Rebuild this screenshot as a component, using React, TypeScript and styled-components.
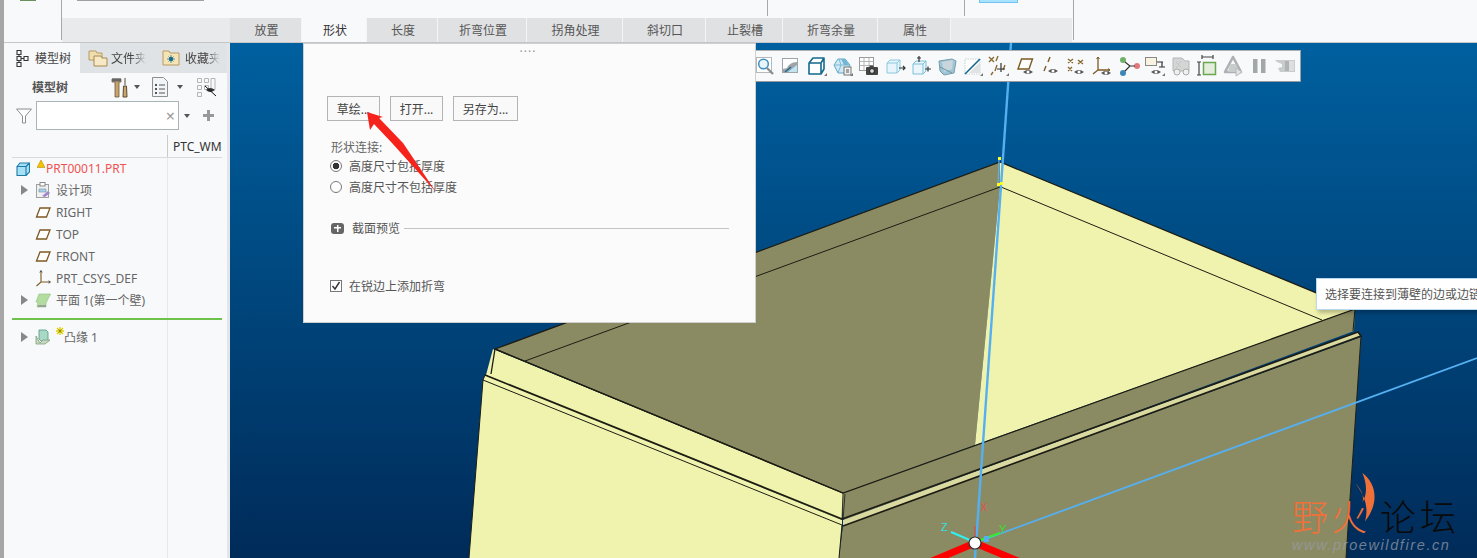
import React from "react";
import styled, { createGlobalStyle } from "styled-components";

const FONT = `"Noto Sans", "Noto Sans CJK SC", "Liberation Sans", sans-serif`;

const GlobalStyle = createGlobalStyle`
  html, body { margin: 0; padding: 0; background: #f8f9fb; }
  * { box-sizing: border-box; }
`;

const ribbonTabs = [
  { label: "放置", w: 72 },
  { label: "形状", w: 65, active: true },
  { label: "长度", w: 71 },
  { label: "折弯位置", w: 89 },
  { label: "拐角处理", w: 96 },
  { label: "斜切口", w: 83 },
  { label: "止裂槽", w: 77 },
  { label: "折弯余量", w: 95 },
  { label: "属性", w: 73 },
];

const Ic = ({ children, size = 24, w, h }: { children: React.ReactNode; size?: number; w?: number; h?: number }) => (
  <svg width={w ?? size} height={h ?? size} viewBox={`0 0 ${w ?? size} ${h ?? size}`} fill="none" style={{ display: "block", flexShrink: 0 }}>
    {children}
  </svg>
);

const Corner = () => <path d="M22 19v3h-3z" fill="#777" />;
const Eye = ({ x = 14, y = 18 }: { x?: number; y?: number }) => (
  <g>
    <path d={`M${x - 5} ${y}q5 -4 10 0q-5 4 -10 0z`} fill="#555" />
    <circle cx={x} cy={y} r="1.5" fill="#fff" />
  </g>
);

// mini toolbar over the model, in order from the left
const toolIcons: React.ReactNode[] = [
  <>
    <rect x="3.5" y="3.5" width="15" height="15" stroke="#b5b9bc" fill="#fff" />
    <circle cx="10.5" cy="10" r="4.8" stroke="#3f8fc0" strokeWidth="1.5" fill="#e8f5fb" />
    <path d="M14 14l6 6" stroke="#8a8f92" strokeWidth="2.4" />
  </>,
  <>
    <rect x="3" y="4" width="16" height="15" fill="#9fa4a8" />
    <path d="M4 5h14v3c-5 0-9 3-10 6l-4 1z" fill="#fff" />
    <path d="M9 18l9-7v7z" fill="#bfe6f5" />
    <path d="M6 18l6-5" stroke="#1d6c92" strokeWidth="1.5" />
  </>,
  <>
    <path d="M4 9h12v11H4zM4 9l4-5h11v11l-3 5M16 9l3-5" stroke="#14688f" strokeWidth="1.6" fill="#fff" strokeLinejoin="round" />
    <Corner />
  </>,
  <>
    <path d="M3 11l4-6h7l5 6-4 8H7z" fill="#cfeaf6" stroke="#5fa6c4" />
    <path d="M8 5l2 6h9M10 11l-7 0M10 11l-3 8" stroke="#7db8d2" />
    <path d="M10 5h4l4 6h-5z" fill="#6fb6d8" />
    <rect x="13" y="13" width="7" height="8" fill="#f1f1f1" stroke="#777" />
    <path d="M15 16h3M15 18h3" stroke="#555" />
    <Corner />
  </>,
  <>
    <rect x="2.5" y="3.5" width="14" height="13" fill="#fff" stroke="#9a9a9a" />
    <path d="M2.5 7.5h14M2.5 11.5h14M7 3.5v13M12 3.5v13" stroke="#b5b5b5" />
    <rect x="9" y="13" width="12" height="8" rx="1" fill="#444" />
    <rect x="12.5" y="11.5" width="4" height="2" fill="#444" />
    <circle cx="15" cy="17" r="2.4" fill="#ddd" stroke="#222" />
  </>,
  <>
    <path d="M4 9l3-3h10v10l-3 3H4z" fill="#e6f5fb" stroke="#8cc6dd" />
    <path d="M4 9h10v10M14 9l3-3" stroke="#8cc6dd" />
    <path d="M16 14h6M20 12l2 2-2 2" stroke="#333" strokeWidth="1.2" />
  </>,
  <>
    <path d="M4 10l3-3h10v10l-3 3H4z" fill="#eaf6fb" stroke="#7cbfd9" />
    <path d="M4 10h10v10M14 10l3-3" stroke="#7cbfd9" />
    <path d="M10 2v6M8 4h4M16 15h6M19 12.5v5" stroke="#333" strokeWidth="1.2" />
  </>,
  <>
    <path d="M4 7l13-2 4 2-2 12-10 2-4-4z" fill="#9fc6d6" stroke="#7c9cab" />
    <path d="M7 8l11-2-1 9-8 3z" fill="#c9d6dc" />
    <path d="M5 13l12 6" stroke="#6d97a9" />
  </>,
  <>
    <path d="M4 5h15v15H4z" fill="#fff" stroke="#c7ced2" strokeDasharray="1.5 1" />
    <path d="M4 20L19 5" stroke="#14688f" strokeWidth="1.6" />
    <path d="M19 8v11H8z" fill="#dfe3e5" />
    <Corner />
  </>,
  <>
    <path d="M2 3l5 5M7 3L2 8M11 2l-2 5M10 11l-2 6M18 11l-2 5M6 18l-2 3" stroke="#8a6a30" strokeWidth="1.4" />
    <path d="M14 9v9M10 15h8" stroke="#333" strokeWidth="1.2" />
    <Corner />
  </>,
  <>
    <path d="M5 15L8.5 5h11L16 15z" stroke="#7d5a22" strokeWidth="1.4" fill="#fff" />
    <Eye x={15} y={18} />
  </>,
  <>
    <path d="M11 3L9 8M7 12l-2 5" stroke="#7d5a22" strokeWidth="1.4" />
    <Eye x={14} y={17} />
  </>,
  <>
    <path d="M3 5l5 4M8 5l-5 4M13 6l5 4M18 6l-5 4M3 13l4 4M7 13l-4 4" stroke="#8a6a30" strokeWidth="1.4" />
    <Eye x={14} y={18} />
  </>,
  <>
    <path d="M7 3v13l-5 4M7 16h12" stroke="#7d5a22" strokeWidth="1.3" />
    <path d="M5.5 5L7 3l1.5 2M17 14.5l2 1.5-2 1.5" stroke="#7d5a22" />
    <Eye x={15} y={19} />
  </>,
  <>
    <circle cx="6" cy="6" r="3" fill="#6fb06a" />
    <circle cx="20" cy="12" r="3" fill="#e2787a" />
    <circle cx="6" cy="19" r="3" fill="#3f88b5" />
    <path d="M8 8l5 4-5 5M13 12h5" stroke="#333" strokeWidth="1.2" />
  </>,
  <>
    <rect x="2.5" y="3.5" width="11" height="8" fill="#fbf3e2" stroke="#888" />
    <path d="M14 8h6M19 8v5M16 13h6" stroke="#333" strokeWidth="1.2" />
    <Eye x={13} y={18} />
    <Corner />
  </>,
  <>
    <path d="M4 4h9l3 3h4v10H4z" fill="#d4d6d6" stroke="#b4b6b6" />
    <path d="M7 8l5 5M12 7l-5 7" stroke="#bbb" strokeDasharray="1 1" />
    <circle cx="8" cy="18" r="3" stroke="#aaa" fill="#f0f0f0" />
    <circle cx="17" cy="18" r="3" stroke="#aaa" fill="#f0f0f0" />
  </>,
  <>
    <path d="M7 3h11M7 1v4M18 1v4M4 8v13M2 8h4M2 21h4" stroke="#444" strokeWidth="1.2" />
    <rect x="8.5" y="8.5" width="12" height="12" fill="#e4ecdc" stroke="#6aa84f" strokeWidth="1.5" />
  </>,
  <>
    <path d="M12 3l8 15H4z" stroke="#aeb1b3" strokeWidth="2.6" strokeLinejoin="round" />
    <path d="M9 10l6 0 3 8H7z" fill="#c9cccd" />
    <path d="M15 14l6 4-6 4z" fill="#e1e3e4" stroke="#b8babc" />
  </>,
  <>
    <rect x="6" y="5" width="4.5" height="14" fill="#a4a7a9" />
    <rect x="14" y="5" width="4.5" height="14" fill="#a4a7a9" />
  </>,
  <>
    <path d="M2 6h20v12H7l-2-4 4-1v-3L4 8z" fill="#c9cccd" />
    <path d="M12 7h9v10h-9z" fill="#b0b3b5" />
    <path d="M16 7h5v10h-5z" fill="#dcdedf" />
  </>,
];

const treeRows = [
  { label: "设计项", arrow: true, icon: "design" },
  { label: "RIGHT", icon: "plane" },
  { label: "TOP", icon: "plane" },
  { label: "FRONT", icon: "plane" },
  { label: "PRT_CSYS_DEF", icon: "csys" },
  { label: "平面 1(第一个壁)", arrow: true, icon: "wall" },
];

const TreeIcon = ({ kind }: { kind: string }) => {
  if (kind === "plane")
    return (
      <Ic w={16} h={16}>
        <path d="M1.5 13L5 4h10l-3.5 9z" stroke="#7d5a22" strokeWidth="1.3" fill="#fff" />
      </Ic>
    );
  if (kind === "csys")
    return (
      <Ic w={16} h={18}>
        <path d="M6 2v11L1.5 17M6 13h9" stroke="#7d5a22" strokeWidth="1.1" />
        <path d="M4.8 3.5L6 1.5l1.2 2M13.5 11.8l2 1.2-2 1.2" stroke="#444" strokeWidth="0.9" />
      </Ic>
    );
  if (kind === "wall")
    return (
      <Ic w={16} h={16}>
        <path d="M4 2h11.5L11 11v4H2l1-5-2 0z" fill="#b3dda0" stroke="#8fbf7a" strokeWidth="0.6" />
        <path d="M3 13h8v2H3z" fill="#9aa09a" />
      </Ic>
    );
  if (kind === "design")
    return (
      <Ic w={16} h={16}>
        <rect x="1.5" y="2.5" width="12" height="13" fill="#f1f1f1" stroke="#a0a0a0" />
        <rect x="5" y="0.5" width="5" height="3.5" fill="#fff" stroke="#888" />
        <path d="M4 7h7v3H4z" fill="#a9d2e6" stroke="#6c8fa1" strokeWidth="0.6" />
        <path d="M7 14l6-5 2 2-5 4z" fill="#a184c9" />
      </Ic>
    );
  return (
    <Ic w={16} h={18}>
      <path d="M4 2h7l2 2v9H6l-2-2z" fill="#a9d8c4" stroke="#4f9a86" strokeWidth="0.8" />
      <path d="M1 8v8h9l5-4H8l-3 3z" fill="#c9d8c0" stroke="#7d9e7a" strokeWidth="0.8" />
    </Ic>
  );
};

function ModelScene() {
  return (
    <Scene viewBox="230 43 1247 515">
      <polygon points="495,349 1000,162 1000,187 975,445 843,493" fill="#8b8b63" />
      <polygon points="1000,162 1355,309 975,445 1000,187" fill="#f0f3ad" />
      <polygon points="843,493 1355,309 1354,331 843,520" fill="#8b8b63" />
      <polygon points="843,526 1361,337 1346,558 839,558" fill="#8b8b63" />
      <polygon points="493,349 843,493 842,520 486,375" fill="#f0f3ad" />
      <polygon points="485,375 842,520 842,526 483,380" fill="#f0f3ad" />
      <polygon points="483,380 842,525 839,558 469,558" fill="#f0f3ad" />
      <polygon points="843,520 1358,332 1361,336 843,526" fill="#d9d9a0" />
      <g stroke="#1d1d14" fill="none">
        <path d="M495 349L1000 162L1355 309L843 493Z" strokeWidth="1.3" />
        <path d="M843 493L495 349L491 374" strokeWidth="1.3" />
        <path d="M1000 187L525 361" strokeWidth="1" />
        <path d="M1001 187L1322 320" strokeWidth="1" />
        <path d="M1355 309L1353 331" strokeWidth="1" />
        <path d="M485 375L842 519L1358 332L1361 336L843 526" strokeWidth="1.7" />
        <path d="M485 375L483 380L842 525L839 558" strokeWidth="1" />
        <path d="M483 380L469 558" strokeWidth="1" />
        <path d="M843 493L842 520M845 494L843 520" strokeWidth="0.8" />
        <path d="M1361 336L1346 558" strokeWidth="1" />
      </g>
      <g stroke="#55b0f2" fill="none">
        <path d="M1011 43L975 558" strokeWidth="2.4" />
        <path d="M975 543L1477 358" strokeWidth="1.8" />
        <path d="M999 160L998 185" strokeWidth="1.2" />
      </g>
      <g fill="#ffff20">
        <rect x="998" y="157" width="3" height="3" />
        <rect x="997" y="183" width="3" height="3" />
        <rect x="1000" y="182" width="3" height="3" />
      </g>
      <path d="M975 543L925 564M975 543L1025 564" stroke="#ff0000" strokeWidth="7" />
      <path d="M972 541L951 532" stroke="#30f0f0" strokeWidth="2" />
      <path d="M978 541L1000 533" stroke="#30f030" strokeWidth="2" />
      <path d="M975 538v-12" stroke="#d05050" strokeWidth="1.2" />
      <rect x="984" y="536" width="5" height="6" fill="#55b0f2" />
      <circle cx="975" cy="543" r="6" fill="#fff" stroke="#333" strokeWidth="1.2" />
      <AxisLabel x="980" y="511" fill="#e05050">X</AxisLabel>
      <AxisLabel x="941" y="531" fill="#30e0e0">Z</AxisLabel>
      <AxisLabel x="999" y="533" fill="#30e030">Y</AxisLabel>
    </Scene>
  );
}

export default function App() {
  return (
    <Root>
      <GlobalStyle />
      <EdgeStrip />
      <Main>
        <TopBar>
          <LogoCell>
            <LogoStub />
          </LogoCell>
          <RibbonArea>
            <RibbonContent>
              <ComboStub />
              <RibbonRule $left={705} />
              <RibbonRule $left={902} />
              <ActiveStub />
            </RibbonContent>
            <TabRow>
              {ribbonTabs.map((t) => (
                <RibbonTab key={t.label} $w={t.w} $active={t.active}>
                  {t.label}
                </RibbonTab>
              ))}
              <TabFiller />
            </TabRow>
          </RibbonArea>
          <TopRest />
        </TopBar>

        <Workspace>
          <LeftPanel>
            <PanelTabs>
              <PanelTab $w={76} $pl={9} $gap={2} $active>
                <Ic w={20} h={22}>
                  <path d="M4 3.5h4v4H4zM4 9.5h4v4H4zM4 15.5h4v4H4zM11 9.5h4v4h-4z" stroke="#333" strokeWidth="1.1" />
                  <path d="M8 11.5h3M6 7.5v2M6 13.5v2" stroke="#333" />
                </Ic>
                <PanelTabLabel>模型树</PanelTabLabel>
              </PanelTab>
              <PanelTab $w={73} $pl={8} $gap={3}>
                <Ic w={20} h={20}>
                  <path d="M1 3h7l1 2h5v7H1z" fill="#f0deb0" stroke="#b89a62" />
                  <path d="M6 8h7l1 2h5v8H6z" fill="#f7e9c4" stroke="#a88a52" />
                </Ic>
                <PanelTabLabel $clipped>文件夹</PanelTabLabel>
              </PanelTab>
              <PanelTab $w={74} $pl={9} $gap={5}>
                <Ic w={18} h={18}>
                  <path d="M1 2h6l1 2h9v12H1z" fill="#f5e4b4" stroke="#b89a62" />
                  <circle cx="9" cy="10" r="2.2" fill="#1d6c92" />
                  <path d="M9 6v8M5 10h8M6.5 7.5l5 5M11.5 7.5l-5 5" stroke="#1d6c92" strokeWidth="0.7" />
                </Ic>
                <PanelTabLabel $clipped>收藏夹</PanelTabLabel>
              </PanelTab>
            </PanelTabs>

            <TreeToolbar>
              <TreeTitle>模型树</TreeTitle>
              <Ic w={20} h={22}>
                <path d="M2 3h9v3H9v15H5V6H2z" fill="#c9a56a" stroke="#5a4a30" strokeWidth="0.7" />
                <path d="M2 2.5h9v3H2z" fill="#666" />
                <path d="M15 2v7M13.5 10h3l.5 11h-4z" fill="#c9a56a" stroke="#5a4a30" />
              </Ic>
              <Caret $ml={4} $mr={12} />
              <Ic w={16} h={20}>
                <path d="M.5.5h11l4 4v15H.5z" fill="#f2f5f7" stroke="#8a9095" />
                <path d="M3 7h2v2H3zM3 11h2v2H3zM3 15h2v2H3z" fill="#555" />
                <path d="M7 8h6M7 12h6M7 16h6" stroke="#555" />
              </Ic>
              <Caret $ml={9} $mr={13} />
              <Ic w={22} h={20}>
                <path d="M1.5 1.5h4v4h-4zM1.5 8.5h4v4h-4zM1.5 15.5h4v4h-4zM8.5 8.5h4v4h-4zM8.5 1.5h4v4h-4zM15 1.5h4v11h-4z" stroke="#b5b5b5" />
                <path d="M10 13q4-4 9 0q-5 4-9 0z" fill="#333" />
                <path d="M9 9l11 10" stroke="#111" />
              </Ic>
            </TreeToolbar>

            <FilterRow>
              <Ic w={16} h={16}>
                <path d="M.5 1h15L9.5 8v7h-3V8z" fill="#fff" stroke="#8a8f92" />
              </Ic>
              <FilterBox>
                <ClearMark>×</ClearMark>
              </FilterBox>
              <Caret $ml={1} $mr={13} />
              <PlusMark />
            </FilterRow>

            <TreeBody>
              <ColumnHead>
                <ColumnName>PTC_WM</ColumnName>
              </ColumnHead>
              <PartRow>
                <Ic w={14} h={14}>
                  <path d="M1 4.5h9v9H1zM1 4.5L4 1h9.5v9L10 13.5M10 4.5L13.5 1" fill="#a6e0f7" stroke="#1d7aa6" strokeWidth="1.1" />
                </Ic>
                <WarnMark>
                  <Ic w={8} h={8}>
                    <path d="M4 0l4 7.5H0z" fill="#f5c400" stroke="#a87f00" strokeWidth="0.5" />
                  </Ic>
                </WarnMark>
                <PartName>PRT00011.PRT</PartName>
              </PartRow>
              {treeRows.map((r) => (
                <TreeRow key={r.label}>
                  <Arrow $hidden={!r.arrow} />
                  <TreeIconSlot>
                    <TreeIcon kind={r.icon} />
                  </TreeIconSlot>
                  <TreeLabel>{r.label}</TreeLabel>
                </TreeRow>
              ))}
              <InsertLine />
              <TreeRow>
                <Arrow />
                <TreeIconSlot>
                  <TreeIcon kind="flange" />
                </TreeIconSlot>
                <NewMark>
                  <Ic w={8} h={8}>
                    <path d="M4 0v8M0 4h8M1 1l6 6M7 1L1 7" stroke="#e0d000" strokeWidth="1.3" />
                    <path d="M2.5 2.5l3 3M5.5 2.5l-3 3" stroke="#444" strokeWidth="0.5" />
                  </Ic>
                </NewMark>
                <TreeLabel $ml={8}>凸缘 1</TreeLabel>
              </TreeRow>
            </TreeBody>
          </LeftPanel>
          <PanelGutter />

          <Viewport>
            <ModelScene />
            <MiniToolbar>
              {toolIcons.map((icon, i) => (
                <ToolSlot key={i}>
                  <Ic size={24}>{icon}</Ic>
                </ToolSlot>
              ))}
            </MiniToolbar>

            <ShapePanel>
              <GripDots>····</GripDots>
              <ButtonRow>
                <DialogButton $w={53}>草绘...</DialogButton>
                <DialogButton $w={53}>打开...</DialogButton>
                <DialogButton $w={65}>另存为...</DialogButton>
              </ButtonRow>
              <SectionTitle>形状连接:</SectionTitle>
              <OptionRow>
                <RadioMark $on />
                高度尺寸包括厚度
              </OptionRow>
              <OptionRow>
                <RadioMark />
                高度尺寸不包括厚度
              </OptionRow>
              <PreviewRow>
                <ExpandMark />
                截面预览
                <PreviewRule />
              </PreviewRow>
              <CheckRow>
                <CheckMark>
                  <Ic w={12} h={12}>
                    <path d="M2.5 6l2.5 3 4.5-7" stroke="#333" strokeWidth="1.4" />
                  </Ic>
                </CheckMark>
                在锐边上添加折弯
              </CheckRow>
            </ShapePanel>

            <HintBox>选择要连接到薄壁的边或边链</HintBox>

            <Watermark>
              <WatermarkTitle>
                <FireText>野火</FireText>
                <ForumText>论坛</ForumText>
              </WatermarkTitle>
              <WatermarkUrl>www.proewildfire.cn</WatermarkUrl>
              <Flame viewBox="0 0 30 60">
                <path d="M12 0C28 12 32 34 15 56C19 40 16 28 4 12C12 20 14 28 12 34C18 24 17 12 12 0Z" fill="#f0703a" />
              </Flame>
            </Watermark>
          </Viewport>
        </Workspace>
      </Main>

      <RedArrow viewBox="0 0 100 100">
        <path d="M2 2L18 7L14 8L38 33L71 82L27 33L9 14L5 20Z" fill="#f5231c" />
      </RedArrow>
    </Root>
  );
}

const Root = styled.div`
  position: relative;
  width: 1477px;
  height: 558px;
  overflow: hidden;
  display: flex;
  font-family: ${FONT};
  font-size: 12px;
  color: #555;
`;
const EdgeStrip = styled.div`
  width: 4px;
  background: #a6a6a6;
`;
const Main = styled.div`
  flex: 1;
  display: flex;
  flex-direction: column;
  min-width: 0;
`;
const TopBar = styled.header`
  height: 43px;
  display: flex;
  background: #f8f9fb;
  border-bottom: 1px solid #c4c6c8;
`;
const LogoCell = styled.div`
  width: 57px;
  padding: 0 0 0 16px;
`;
const LogoStub = styled.div`
  width: 16px;
  height: 1px;
  background: #6a8f5a;
`;
const RibbonArea = styled.div`
  width: 1012px;
  display: flex;
  flex-direction: column;
  border-left: 1px solid #a8a8a8;
  margin-bottom: 2px;
`;
const RibbonContent = styled.div`
  position: relative;
  height: 18px;
  padding-left: 15px;
`;
const ComboStub = styled.div`
  width: 127px;
  height: 1px;
  background: #a0a0a0;
`;
const RibbonRule = styled.div<{ $left: number }>`
  position: absolute;
  left: ${(p) => p.$left}px;
  top: 0;
  width: 1px;
  height: 16px;
  background: #a8a8a8;
`;
const ActiveStub = styled.div`
  position: absolute;
  left: 917px;
  top: 0;
  width: 39px;
  height: 3px;
  background: #a8e2ff;
  border: 1px solid #72c4f0;
  border-top: 0;
`;
const TabRow = styled.nav`
  flex: 1;
  display: flex;
  background: #e9eaeb;
  padding-left: 168px;
  margin-bottom: -2px;
  margin-right: 1px;
`;
const RibbonTab = styled.div<{ $w: number; $active?: boolean }>`
  width: ${(p) => p.$w}px;
  display: flex;
  align-items: center;
  justify-content: center;
  padding-left: 2px;
  background: ${(p) => (p.$active ? "#f8f9fb" : "#e0e1e3")};
  border-right: 1px solid #f4f5f6;
  color: ${(p) => (p.$active ? "#333" : "#555")};
`;
const TabFiller = styled.div`
  flex: 1;
`;
const TopRest = styled.div`
  flex: 1;
  border-left: 1px solid #a8a8a8;
  margin-bottom: 2px;
`;
const Workspace = styled.div`
  flex: 1;
  display: flex;
  min-height: 0;
`;
const LeftPanel = styled.aside`
  width: 223px;
  display: flex;
  flex-direction: column;
  background: #f8f9fb;
`;
const PanelGutter = styled.div`
  width: 3px;
  background: #e3e6e8;
`;
const PanelTabs = styled.div`
  height: 30px;
  display: flex;
  background: #dfe3e5;
`;
const PanelTab = styled.div<{ $w: number; $pl: number; $gap: number; $active?: boolean }>`
  width: ${(p) => p.$w}px;
  display: flex;
  align-items: center;
  gap: ${(p) => p.$gap}px;
  padding-left: ${(p) => p.$pl}px;
  background: ${(p) => (p.$active ? "#f8f9fb" : "transparent")};
  overflow: hidden;
`;
const PanelTabLabel = styled.span<{ $clipped?: boolean }>`
  width: 36px;
  flex-shrink: 0;
  white-space: nowrap;
  overflow: hidden;
  color: #444;
  ${(p) => (p.$clipped ? "mask-image: linear-gradient(90deg, #000 60%, transparent 97%);" : "")}
`;
const TreeToolbar = styled.div`
  height: 28px;
  display: flex;
  align-items: center;
  padding-left: 28px;
`;
const TreeTitle = styled.span`
  width: 78px;
  font-weight: 700;
  color: #555;
`;
const Caret = styled.span<{ $ml?: number; $mr?: number }>`
  width: 0;
  height: 0;
  margin-left: ${(p) => p.$ml ?? 0}px;
  margin-right: ${(p) => p.$mr ?? 0}px;
  border-left: 3.5px solid transparent;
  border-right: 3.5px solid transparent;
  border-top: 4px solid #555;
`;
const FilterRow = styled.div`
  height: 29px;
  display: flex;
  align-items: center;
  padding-left: 12px;
  gap: 4px;
`;
const FilterBox = styled.div`
  width: 143px;
  height: 29px;
  background: #fff;
  border: 1px solid #a9b4b8;
  display: flex;
  align-items: center;
  justify-content: flex-end;
  padding-right: 3px;
`;
const ClearMark = styled.span`
  font-size: 16px;
  line-height: 1;
  color: #999;
`;
const PlusMark = styled.span`
  width: 11px;
  height: 11px;
  margin-left: -4px;
  background:
    linear-gradient(#999, #999) center / 100% 3px no-repeat,
    linear-gradient(#999, #999) center / 3px 100% no-repeat;
`;
const TreeBody = styled.div`
  flex: 1;
  margin: 5px 5px 0 8px;
  display: flex;
  flex-direction: column;
  background: linear-gradient(#e6e8ea, #e6e8ea) 155px 0 / 1px 100% no-repeat;
`;
const ColumnHead = styled.div`
  height: 23px;
  flex-shrink: 0;
  border-bottom: 1px solid #d8dadc;
  padding-left: 161px;
  display: flex;
  align-items: center;
  background: linear-gradient(#c9cbcd, #c9cbcd) 155px 0 / 1px 100% no-repeat;
`;
const ColumnName = styled.span`
  color: #333;
  width: 50px;
  overflow: hidden;
  white-space: nowrap;
`;
const PartRow = styled.div`
  position: relative;
  height: 21px;
  flex-shrink: 0;
  display: flex;
  align-items: center;
  padding-left: 4px;
`;
const WarnMark = styled.span`
  position: absolute;
  left: 25px;
  top: 2px;
`;
const PartName = styled.span`
  margin-left: 16px;
  color: #f0524f;
`;
const TreeRow = styled.div`
  position: relative;
  height: 22px;
  flex-shrink: 0;
  display: flex;
  align-items: center;
  padding-left: 9px;
`;
const Arrow = styled.span<{ $hidden?: boolean }>`
  width: 0;
  height: 0;
  visibility: ${(p) => (p.$hidden ? "hidden" : "visible")};
  border-top: 5px solid transparent;
  border-bottom: 5px solid transparent;
  border-left: 7px solid #888;
`;
const TreeIconSlot = styled.span`
  width: 28px;
  padding-left: 7px;
  display: flex;
`;
const TreeLabel = styled.span<{ $ml?: number }>`
  margin-left: ${(p) => p.$ml ?? 0}px;
  color: #666;
  white-space: nowrap;
`;
const NewMark = styled.span`
  position: absolute;
  left: 44px;
  top: 1px;
`;
const InsertLine = styled.div`
  height: 2px;
  margin: 7px 0 6px;
  flex-shrink: 0;
  background: #6cc24a;
`;
const Viewport = styled.main`
  position: relative;
  flex: 1;
  overflow: hidden;
  background: linear-gradient(#00609f, #002b59);
`;
const Scene = styled.svg`
  position: absolute;
  inset: 0;
  width: 100%;
  height: 100%;
`;
const AxisLabel = styled.text`
  font-family: "Liberation Sans", sans-serif;
  font-size: 11px;
`;
const MiniToolbar = styled.div`
  position: absolute;
  left: 522px;
  top: 7px;
  width: 549px;
  height: 32px;
  display: flex;
  align-items: center;
  background: #f8f9fb;
  border-top: 1px solid #b0b0b0;
  border-right: 1px solid #a0a0a0;
  border-bottom: 1px solid #999;
`;
const ToolSlot = styled.span`
  width: 26px;
  display: flex;
  justify-content: center;
`;
const ShapePanel = styled.section`
  position: absolute;
  left: 73px;
  top: 0;
  width: 453px;
  height: 280px;
  background: #fbfbfb;
  border: 1px solid #cfcfcf;
  padding: 0 26px 0 23px;
  display: flex;
  flex-direction: column;
`;
const GripDots = styled.div`
  height: 14px;
  margin-top: 1px;
  line-height: 14px;
  text-align: center;
  letter-spacing: 1px;
  color: #999;
`;
const ButtonRow = styled.div`
  display: flex;
  gap: 10px;
  margin-top: 37px;
`;
const DialogButton = styled.div<{ $w: number }>`
  width: ${(p) => p.$w}px;
  height: 25px;
  border: 1px solid #b4b4b4;
  background: #f9f9f9;
  display: flex;
  align-items: center;
  justify-content: center;
  color: #444;
`;
const SectionTitle = styled.div`
  margin: 19px 0 0 4px;
  height: 15px;
  line-height: 16px;
  color: #666;
`;
const OptionRow = styled.div`
  height: 21px;
  display: flex;
  align-items: center;
  gap: 7px;
  padding-left: 3px;
  color: #555;
`;
const RadioMark = styled.span<{ $on?: boolean }>`
  width: 12px;
  height: 12px;
  border-radius: 50%;
  border: 1px solid #777;
  background: ${(p) => (p.$on ? "radial-gradient(circle, #333 0 3px, #fff 3.6px)" : "#fff")};
`;
const PreviewRow = styled.div`
  margin-top: 21px;
  height: 20px;
  display: flex;
  align-items: center;
  padding-left: 4px;
  color: #555;
`;
const ExpandMark = styled.span`
  width: 13px;
  height: 11px;
  margin-right: 8px;
  border-radius: 3px;
  background:
    linear-gradient(#fff, #fff) center / 7px 1.5px no-repeat,
    linear-gradient(#fff, #fff) center / 1.5px 7px no-repeat,
    #666;
`;
const PreviewRule = styled.span`
  flex: 1;
  height: 1px;
  margin-left: 4px;
  background: #c4c4c4;
`;
const CheckRow = styled.div`
  margin-top: 38px;
  height: 20px;
  display: flex;
  align-items: center;
  gap: 7px;
  padding-left: 3px;
  color: #555;
`;
const CheckMark = styled.span`
  width: 12px;
  height: 12px;
  border: 1px solid #777;
  background: #fff;
  display: flex;
  align-items: center;
  justify-content: center;
`;
const HintBox = styled.div`
  position: absolute;
  left: 1086px;
  top: 235px;
  width: 200px;
  height: 32px;
  padding-left: 8px;
  display: flex;
  align-items: center;
  white-space: nowrap;
  background: #fff;
  border: 1px solid #b9d9ef;
  box-shadow: 2px 3px 4px rgba(0, 0, 0, 0.25);
  color: #555;
`;
const Watermark = styled.div`
  position: absolute;
  left: 1062px;
  top: 452px;
  width: 180px;
  height: 60px;
`;
const WatermarkTitle = styled.div`
  display: flex;
  gap: 10px;
  font-size: 36px;
  line-height: 40px;
  font-weight: 300;
  white-space: nowrap;
  font-family: "Noto Sans CJK SC", sans-serif;
`;
const FireText = styled.span`
  color: #f0703a;
  letter-spacing: 3px;
`;
const ForumText = styled.span`
  color: #0a0a0a;
  letter-spacing: 4px;
`;
const WatermarkUrl = styled.div`
  font-family: "Liberation Sans", sans-serif;
  font-style: italic;
  font-size: 14.5px;
  line-height: 16px;
  letter-spacing: 1.6px;
  color: rgba(150, 155, 165, 0.75);
  margin-top: 2px;
  white-space: nowrap;
`;
const Flame = styled.svg`
  position: absolute;
  left: 60px;
  top: -22px;
  width: 26px;
  height: 52px;
`;
const RedArrow = styled.svg`
  position: absolute;
  left: 365px;
  top: 110px;
  width: 100px;
  height: 100px;
`;
